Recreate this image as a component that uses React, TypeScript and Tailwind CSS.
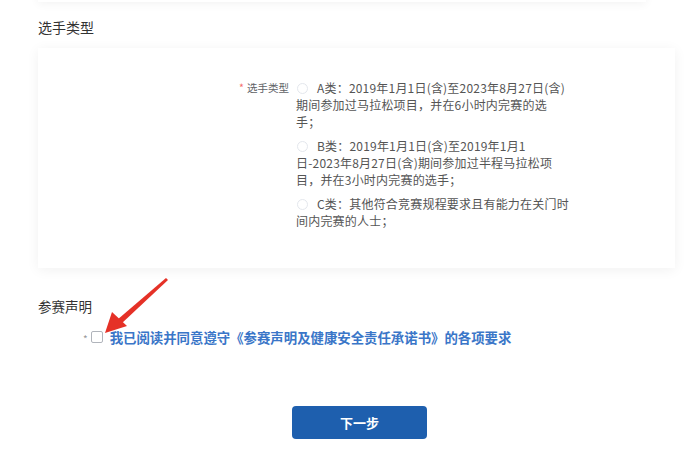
import React from "react";

// line breaks follow the reference
const options = [
  ["A类：2019年1月1日(含)至2023年8月27日(含)", "期间参加过马拉松项目，并在6小时内完赛的选", "手；"],
  ["B类：2019年1月1日(含)至2019年1月1", "日-2023年8月27日(含)期间参加过半程马拉松项", "目，并在3小时内完赛的选手；"],
  ["C类：其他符合竞赛规程要求且有能力在关门时", "间内完赛的人士；"],
];

function Arrow() {
  // red annotation arrow pointing at the checkbox
  return (
    <svg className="absolute left-[98px] top-[276px] pointer-events-none" width="76" height="62" viewBox="0 0 76 62">
      <path d="M70 4 L68 2 L19 44 L23 48 Z" fill="#e53127" />
      <path d="M7 57 L14 36 L29 50 Z" fill="#e53127" />
    </svg>
  );
}

export default function App() {
  return (
    <div
      className="relative w-[684px] h-[471px] overflow-hidden bg-white text-[#333]"
      style={{ fontFamily: '"Noto Sans CJK SC", "Noto Sans", sans-serif' }}
    >
      {/* bottom of previous card */}
      <div className="mx-[38px] -mt-[30px] h-[32px] bg-white shadow-[0_2px_10px_rgba(0,0,0,0.05)]" />

      <div className="px-[38px]">
        <div className="h-[44px] pt-[6px] flex items-center text-[14px] leading-none">选手类型</div>

        <div className="mt-[2px] w-[637px] h-[220px] bg-white shadow-[0_2px_12px_rgba(0,0,0,0.06)] pt-[31px] pl-[151px] flex">
          <div className="w-[100px] text-right text-[10.5px] leading-[17px] text-[#606266]">
            <span className="text-[#f56c6c] mr-[3px]">*</span>
            选手类型
          </div>
          <div className="ml-[7px] text-[12px] tracking-[0.2px] leading-[17px] text-[#555] whitespace-nowrap">
            {options.map((lines) => (
              <div key={lines[0]} className="mb-[7px]">
                {lines.map((l, i) => (
                  <div key={l}>
                    {i === 0 && (
                      <span className="inline-block w-[11px] h-[11px] rounded-full border border-[#e4e7ed] bg-white align-[-1px] ml-[1px] mr-[9px]" />
                    )}
                    {l}
                  </div>
                ))}
              </div>
            ))}
          </div>
        </div>

        <div className="mt-[28px] text-[13.5px] leading-[20px]">参赛声明</div>

        <div className="mt-[11px] ml-[45px] flex items-center h-[20px]">
          <span className="text-[10px] text-[#999] mr-[3px] mt-[2px]">*</span>
          <span className="w-[12px] h-[12px] border border-[#b0b4bb] rounded-[2px] bg-white mr-[7px]" />
          <span className="text-[13.4px] font-bold text-[#3a76c8]">
            我已阅读并同意遵守《参赛声明及健康安全责任承诺书》的各项要求
          </span>
        </div>

        <div className="mt-[59px] pl-[254px]">
          <button className="w-[135px] h-[33px] rounded-[4px] bg-[#1e5fae] text-white text-[13px] font-bold">
            下一步
          </button>
        </div>
      </div>

      <Arrow />
    </div>
  );
}
